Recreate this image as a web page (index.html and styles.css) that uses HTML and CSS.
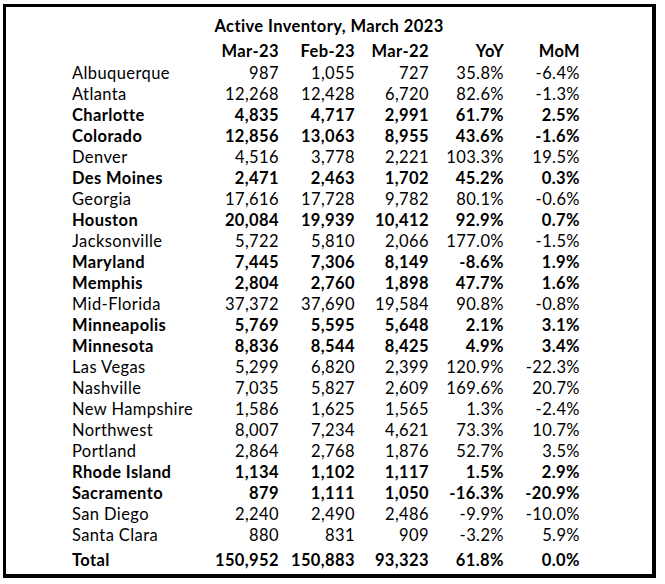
FILE: index.html
```html
<!DOCTYPE html>
<html>
<head>
<meta charset="utf-8">
<link rel="stylesheet" href="styles.css">
</head>
<body>
<div class="frame">
  <div class="title">Active Inventory, March 2023</div>
  <div class="grid">
    <div class="row head"><span class="name"></span><span>Mar-23</span><span>Feb-23</span><span>Mar-22</span><span>YoY</span><span>MoM</span></div>
    <div class="row"><span class="name">Albuquerque</span><span>987</span><span>1,055</span><span>727</span><span>35.8%</span><span>-6.4%</span></div>
    <div class="row"><span class="name">Atlanta</span><span>12,268</span><span>12,428</span><span>6,720</span><span>82.6%</span><span>-1.3%</span></div>
    <div class="row b"><span class="name">Charlotte</span><span>4,835</span><span>4,717</span><span>2,991</span><span>61.7%</span><span>2.5%</span></div>
    <div class="row b"><span class="name">Colorado</span><span>12,856</span><span>13,063</span><span>8,955</span><span>43.6%</span><span>-1.6%</span></div>
    <div class="row"><span class="name">Denver</span><span>4,516</span><span>3,778</span><span>2,221</span><span>103.3%</span><span>19.5%</span></div>
    <div class="row b"><span class="name">Des Moines</span><span>2,471</span><span>2,463</span><span>1,702</span><span>45.2%</span><span>0.3%</span></div>
    <div class="row"><span class="name">Georgia</span><span>17,616</span><span>17,728</span><span>9,782</span><span>80.1%</span><span>-0.6%</span></div>
    <div class="row b"><span class="name">Houston</span><span>20,084</span><span>19,939</span><span>10,412</span><span>92.9%</span><span>0.7%</span></div>
    <div class="row"><span class="name">Jacksonville</span><span>5,722</span><span>5,810</span><span>2,066</span><span>177.0%</span><span>-1.5%</span></div>
    <div class="row b"><span class="name">Maryland</span><span>7,445</span><span>7,306</span><span>8,149</span><span>-8.6%</span><span>1.9%</span></div>
    <div class="row b"><span class="name">Memphis</span><span>2,804</span><span>2,760</span><span>1,898</span><span>47.7%</span><span>1.6%</span></div>
    <div class="row"><span class="name">Mid-Florida</span><span>37,372</span><span>37,690</span><span>19,584</span><span>90.8%</span><span>-0.8%</span></div>
    <div class="row b"><span class="name">Minneapolis</span><span>5,769</span><span>5,595</span><span>5,648</span><span>2.1%</span><span>3.1%</span></div>
    <div class="row b"><span class="name">Minnesota</span><span>8,836</span><span>8,544</span><span>8,425</span><span>4.9%</span><span>3.4%</span></div>
    <div class="row"><span class="name">Las Vegas</span><span>5,299</span><span>6,820</span><span>2,399</span><span>120.9%</span><span>-22.3%</span></div>
    <div class="row"><span class="name">Nashville</span><span>7,035</span><span>5,827</span><span>2,609</span><span>169.6%</span><span>20.7%</span></div>
    <div class="row"><span class="name">New Hampshire</span><span>1,586</span><span>1,625</span><span>1,565</span><span>1.3%</span><span>-2.4%</span></div>
    <div class="row"><span class="name">Northwest</span><span>8,007</span><span>7,234</span><span>4,621</span><span>73.3%</span><span>10.7%</span></div>
    <div class="row"><span class="name">Portland</span><span>2,864</span><span>2,768</span><span>1,876</span><span>52.7%</span><span>3.5%</span></div>
    <div class="row b"><span class="name">Rhode Island</span><span>1,134</span><span>1,102</span><span>1,117</span><span>1.5%</span><span>2.9%</span></div>
    <div class="row b"><span class="name">Sacramento</span><span>879</span><span>1,111</span><span>1,050</span><span>-16.3%</span><span>-20.9%</span></div>
    <div class="row"><span class="name">San Diego</span><span>2,240</span><span>2,490</span><span>2,486</span><span>-9.9%</span><span>-10.0%</span></div>
    <div class="row"><span class="name">Santa Clara</span><span>880</span><span>831</span><span>909</span><span>-3.2%</span><span>5.9%</span></div>
    <div class="row b total"><span class="name">Total</span><span>150,952</span><span>150,883</span><span>93,323</span><span>61.8%</span><span>0.0%</span></div>
  </div>
</div>
</body>
</html>
```
FILE: styles.css
```css
html, body {
  margin: 0;
  padding: 0;
  background: #ffffff;
}
body {
  font-family: Lato, "Open Sans", sans-serif;
  font-size: 16.5px;
  letter-spacing: 0.4px;
  color: #000000;
}
.frame {
  margin: 4px 0 0 3px;
  width: 646px;
  height: 558px;
  border-style: solid;
  border-color: #000000;
  border-width: 3px 4px 4px 3px;
  padding-top: 9px;
  box-sizing: content-box;
}
.title {
  height: 25px;
  line-height: 21px;
  font-weight: bold;
  text-align: center;
}
.grid {
  padding-left: 66px;
}
.row {
  display: grid;
  grid-template-columns: 140px 67px 76px 74px 75px 76px;
  height: 21px;
  line-height: 21px;
  white-space: nowrap;
}
.row span {
  text-align: right;
}
.row .name {
  text-align: left;
}
.head {
  height: 22px;
  font-weight: bold;
}
.b {
  font-weight: bold;
}
.total {
  margin-top: 4px;
}
```
